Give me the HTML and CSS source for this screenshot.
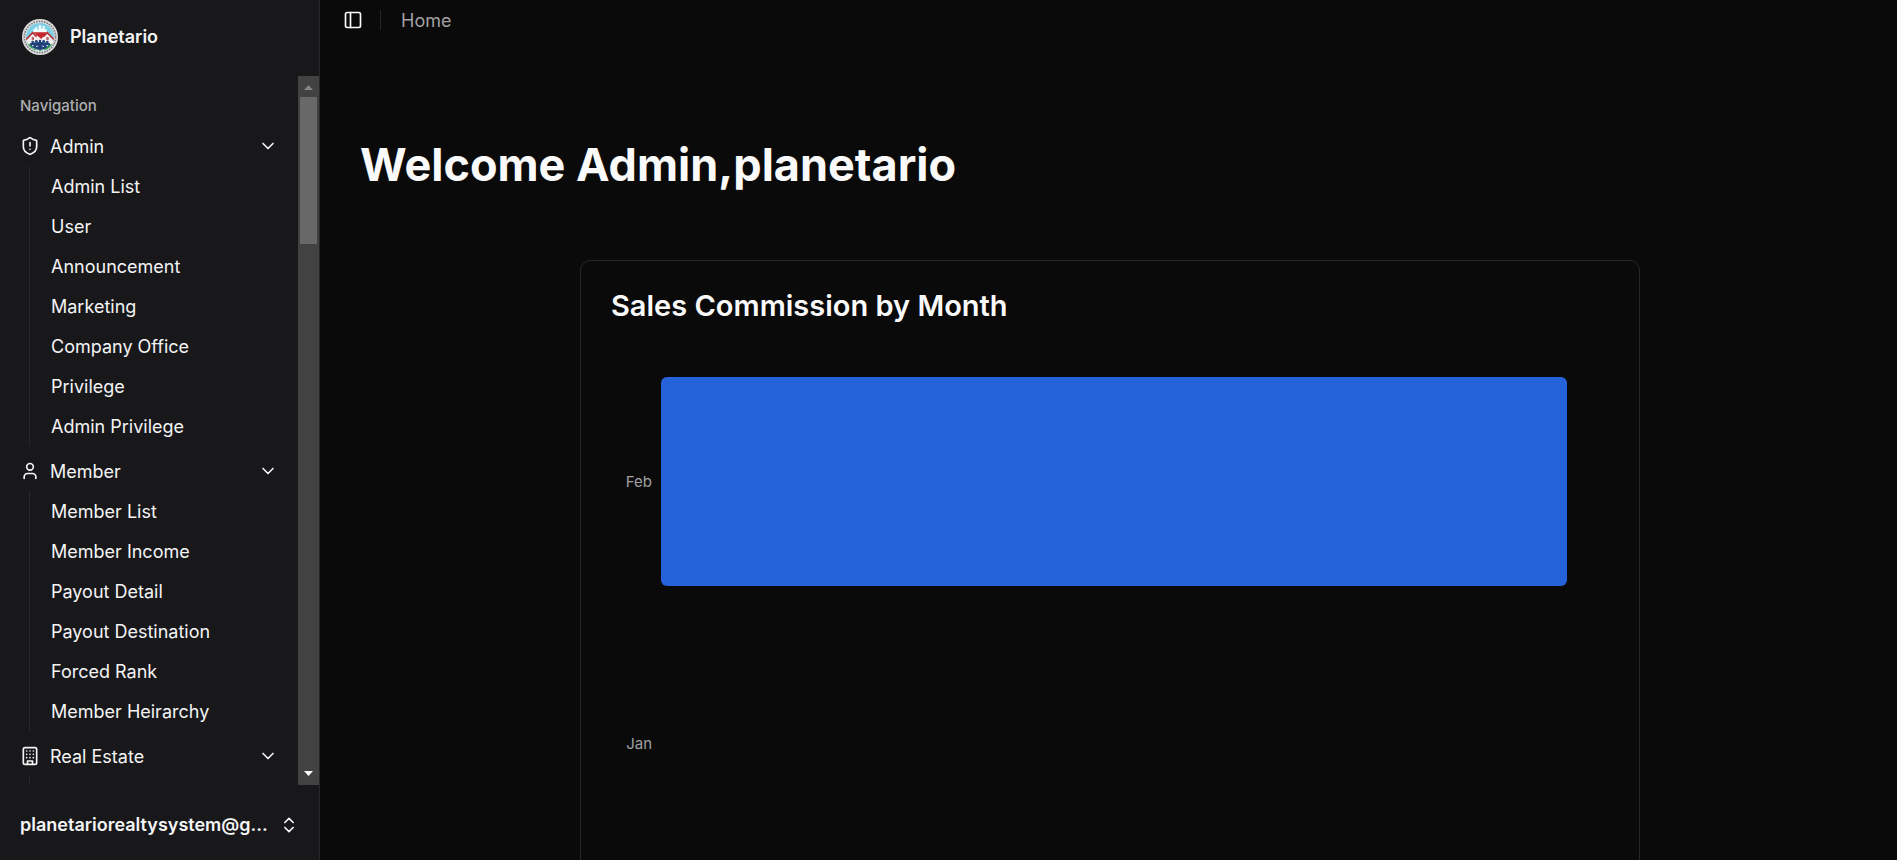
FILE: index.html
```html
<!DOCTYPE html>
<html lang="en">
<head>
<meta charset="utf-8">
<meta name="viewport" content="width=device-width, initial-scale=1">
<title>Planetario</title>
<link rel="stylesheet" href="styles.css">
</head>
<body>
<div class="app">
  <aside class="sidebar">
    <a class="brand" href="#">
      <svg class="brand-logo" viewBox="0 0 108 108" aria-hidden="true">
        <defs><clipPath id="seal"><circle cx="54" cy="54" r="42"/></clipPath></defs>
        <circle cx="54" cy="54" r="54" fill="#dedede"/>
        <circle cx="54" cy="54" r="47" fill="none" stroke="#808285" stroke-width="5" stroke-dasharray="5 3"/>
        <g clip-path="url(#seal)">
          <rect width="108" height="108" fill="#7fcfe6"/>
          <path d="M34 60V30h6v-6h6v8h4V19h8v10h4v-8h6v10h6v29z" fill="#f4fbfd"/>
          <path d="M8 68 32 40l22 12 22-12 24 28v12H8z" fill="#f3eeee"/>
          <path d="M10 64 32 41l12 12 M64 53l12-12 22 23" fill="none" stroke="#b92f35" stroke-width="5"/>
          <path d="M34 40h40L58 60z" fill="#c4272e"/>
          <path d="M29 54h7v9h-7z M73 54h7v9h-7z" fill="#b9666a"/>
          <path d="M8 70h92v38H8z" fill="#f2f7f2"/>
          <path d="M24 73q30-8 60 0v6q-10 12-30 14-20-2-30-14z" fill="#1f4079"/>
          <circle cx="32" cy="69" r="4" fill="#20437c"/><circle cx="43" cy="67" r="4" fill="#20437c"/><circle cx="54" cy="66" r="4" fill="#20437c"/><circle cx="65" cy="67" r="4" fill="#20437c"/><circle cx="76" cy="69" r="4" fill="#20437c"/>
          <path d="M30 78h5v4h-5z M42 80h5v4h-5z M61 80h5v4h-5z M73 78h5v4h-5z" fill="#c9d3e4"/>
          <path d="M10 70q16 5 24 18l-8 4Q22 80 10 76z M32 90l10-2-4 16h-8z M50 94h9l-2 12h-8z M66 90l8-4q4-10 26-14v8q-16 4-20 10l-8 12z" fill="#279a50"/>
        </g>
      </svg>
      <span class="brand-name">Planetario</span>
    </a>

    <div class="nav-scroll">
      <nav class="nav" aria-label="Navigation">
        <div class="nav-label">Navigation</div>

        <section class="group">
          <button class="group-toggle" type="button" aria-expanded="true">
            <svg class="icon" viewBox="0 0 24 24" aria-hidden="true"><path d="M20 13c0 5-3.500 7.500-7.660 8.950a1 1 0 0 1-.67-.01C7.500 20.500 4 18 4 13V6a1 1 0 0 1 1-1c2 0 4.500-1.200 6.240-2.720a1.170 1.170 0 0 1 1.520 0C14.510 3.810 17 5 19 5a1 1 0 0 1 1 1z"/><path d="M12 8v4M12 16h.01"/></svg>
            <span class="group-name">Admin</span>
            <svg class="icon" viewBox="0 0 24 24" aria-hidden="true"><path d="m6 9 6 6 6-6"/></svg>
          </button>
          <ul class="sub">
            <li><a href="#">Admin List</a></li>
            <li><a href="#">User</a></li>
            <li><a href="#">Announcement</a></li>
            <li><a href="#">Marketing</a></li>
            <li><a href="#">Company Office</a></li>
            <li><a href="#">Privilege</a></li>
            <li><a href="#">Admin Privilege</a></li>
          </ul>
        </section>

        <section class="group">
          <button class="group-toggle" type="button" aria-expanded="true">
            <svg class="icon" viewBox="0 0 24 24" aria-hidden="true"><path d="M19 21v-2a4 4 0 0 0-4-4H9a4 4 0 0 0-4 4v2"/><circle cx="12" cy="7" r="4"/></svg>
            <span class="group-name">Member</span>
            <svg class="icon" viewBox="0 0 24 24" aria-hidden="true"><path d="m6 9 6 6 6-6"/></svg>
          </button>
          <ul class="sub">
            <li><a href="#">Member List</a></li>
            <li><a href="#">Member Income</a></li>
            <li><a href="#">Payout Detail</a></li>
            <li><a href="#">Payout Destination</a></li>
            <li><a href="#">Forced Rank</a></li>
            <li><a href="#">Member Heirarchy</a></li>
          </ul>
        </section>

        <section class="group">
          <button class="group-toggle" type="button" aria-expanded="true">
            <svg class="icon" viewBox="0 0 24 24" aria-hidden="true"><rect x="4" y="2" width="16" height="20" rx="2"/><path d="M9 22v-4h6v4M8 6h.01M16 6h.01M12 6h.01M12 10h.01M12 14h.01M16 10h.01M16 14h.01M8 10h.01M8 14h.01"/></svg>
            <span class="group-name">Real Estate</span>
            <svg class="icon" viewBox="0 0 24 24" aria-hidden="true"><path d="m6 9 6 6 6-6"/></svg>
          </button>
          <ul class="sub sub-next"></ul>
        </section>
      </nav>
      <div class="scrollbar" aria-hidden="true">
        <svg class="scroll-arrow" viewBox="0 0 21 21"><path d="M6 14 10.500 9 15 14z" fill="#868686"/></svg>
        <div class="scroll-track"><div class="scroll-thumb"></div></div>
        <svg class="scroll-arrow" viewBox="0 0 21 21"><path d="M6 7 10.500 12 15 7z" fill="#fff"/></svg>
      </div>
    </div>

    <div class="account">
      <button class="account-button" type="button">
        <span class="account-email">planetariorealtysystem@g...</span>
        <svg class="icon" viewBox="0 0 24 24" aria-hidden="true"><path d="m7 15 5 5 5-5M7 9l5-5 5 5"/></svg>
      </button>
    </div>
  </aside>

  <main class="main">
    <header class="topbar">
      <button class="panel-toggle" type="button" aria-label="Toggle Sidebar">
        <svg class="icon" viewBox="0 0 24 24" aria-hidden="true"><rect x="3" y="3" width="18" height="18" rx="2"/><path d="M9 3v18"/></svg>
      </button>
      <span class="divider"></span>
      <a class="crumb" href="#">Home</a>
    </header>
    <div class="content">
      <h1 class="welcome">Welcome Admin,planetario</h1>
      <section class="card">
        <h2 class="card-title">Sales Commission by Month</h2>
        <div class="chart">
          <div class="row"><span class="tick">Feb</span><div class="bar" style="width:100%"></div></div>
          <div class="row"><span class="tick">Jan</span><div class="bar" style="width:0%"></div></div>
        </div>
      </section>
    </div>
  </main>
</div>
</body>
</html>
```
FILE: styles.css
```css
* { box-sizing: border-box; }

body {
  margin: 0;
  background: #0a0a0a;
  color: #fafafa;
  font: 18px/24px Inter, "Liberation Sans", sans-serif;
}

a { color: inherit; text-decoration: none; }

button {
  padding: 0;
  border: 0;
  background: none;
  color: inherit;
  font: inherit;
  text-align: left;
  cursor: pointer;
}

.app { display: flex; height: 100vh; overflow: hidden; }

.icon {
  flex: none;
  width: 20px;
  height: 20px;
  fill: none;
  stroke: currentColor;
  stroke-width: 2;
  stroke-linecap: round;
  stroke-linejoin: round;
}

/* Sidebar */
.sidebar {
  display: flex;
  flex: none;
  flex-direction: column;
  width: 320px;
  border-right: 1px solid #27272a;
  background: #18181b;
  color: #f4f4f5;
}

.brand {
  display: flex;
  align-items: center;
  gap: 12px;
  height: 76px;
  padding: 0 22px 3px;
}

.brand-logo { width: 36px; height: 36px; }
.brand-name { font-weight: 600; }

.nav-scroll { display: flex; flex: 1; min-height: 0; }

.nav { flex: 1; overflow: hidden; padding: 10px; }

.nav-label {
  padding: 0 10px;
  color: #adadaf;
  font-size: 15px;
  font-weight: 500;
  line-height: 40px;
}

.group { margin-bottom: 5px; }

.group-toggle {
  display: flex;
  align-items: center;
  gap: 10px;
  width: 100%;
  height: 40px;
  padding: 0 10px;
}

.group-name { flex: 1; padding-top: 2px; }

.sub {
  margin: 0 0 0 19px;
  padding: 0 0 0 21px;
  border-left: 1px solid #27272a;
  list-style: none;
}

.sub a { display: block; padding-top: 2px; line-height: 38px; }
.sub-next { height: 40px; }

.scrollbar {
  display: flex;
  flex: none;
  flex-direction: column;
  width: 21px;
  background: #424242;
}

.scroll-arrow { width: 21px; height: 21px; }
.scroll-track { flex: 1; padding: 0 2px; }
.scroll-thumb { height: 22%; background: #686868; }

.account { padding: 10px 10px 5px; }

.account-button {
  display: flex;
  align-items: center;
  gap: 10px;
  width: 100%;
  height: 60px;
  padding: 0 10px;
}

.account-email {
  flex: 1;
  font-weight: 600;
  white-space: nowrap;
}

/* Main area */
.main { flex: 1; min-width: 0; overflow: hidden; }

.topbar {
  display: flex;
  align-items: center;
  height: 40px;
  padding: 0 23px;
}

.panel-toggle { display: flex; }
.divider { width: 1px; height: 20px; margin: 0 20px 0 17px; background: #27272a; }
.crumb { padding-top: 2px; color: #a1a1a1; }

.content { padding: 100px 37px 40px 40px; }

.welcome {
  margin: 0 0 70px;
  font-size: 45px;
  font-weight: 700;
  line-height: 50px;
}

.card {
  max-width: 1060px;
  margin: 0 auto;
  padding: 30px;
  border: 1px solid #27272a;
  border-radius: 10px;
}

.card-title {
  margin: 0;
  font-size: 29px;
  font-weight: 600;
  line-height: 30px;
}

.chart {
  display: flex;
  flex-direction: column;
  gap: 53px;
  padding: 56px 42px 56px 0;
}

.row { display: flex; align-items: center; height: 209px; }

.tick {
  flex: none;
  width: 50px;
  padding-right: 9px;
  color: #a1a1a1;
  font-size: 15px;
  text-align: right;
}

.bar { height: 100%; border-radius: 6px; background: #2662d9; }
```
